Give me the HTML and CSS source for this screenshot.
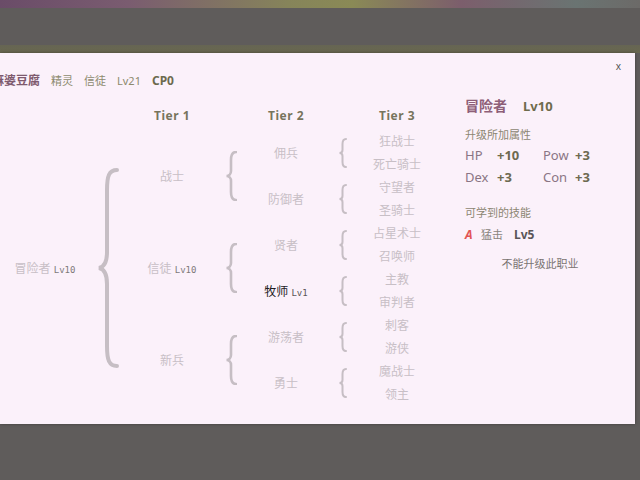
FILE: index.html
```html
<!DOCTYPE html>
<html lang="zh">
<head>
    <meta charset="UTF-8">
    <meta name="viewport" content="width=device-width, initial-scale=1.0">
    <title>职业树</title>
    <link rel="stylesheet" href="styles.css">
</head>
<body>

    <div class="modal">
        <span class="close">x</span>

        <div class="tree-side">
            <div class="who">
                <span class="name">麻婆豆腐</span>
                <span>精灵</span>
                <span>信徒</span>
                <span>Lv21</span>
                <span class="cp">CP0</span>
            </div>

            <div class="tier-heads">
                <span class="th th1">Tier 1</span>
                <span class="th th2">Tier 2</span>
                <span class="th th3">Tier 3</span>
            </div>

            <div class="branch">
                <div class="node lvl0">冒险者 <small>Lv10</small></div>
                <svg class="brace big" viewBox="0 0 22 200"><path d="M20,2 C12,2 10,8 10,22 L10,84 C10,94 7,99 2,100 C7,101 10,106 10,116 L10,178 C10,192 12,198 20,198"/></svg>
                <div class="kids">

                    <div class="branch">
                        <div class="node lvl1">战士</div>
                        <svg class="brace mid" viewBox="0 0 12 50"><path d="M11,1 C7,1 6,4 6,9 L6,20 C6,23 4,25 1.5,25 C4,25 6,27 6,30 L6,41 C6,46 7,49 11,49"/></svg>
                        <div class="kids">
                            <div class="branch">
                                <div class="node lvl2">佣兵</div>
                                <svg class="brace small" viewBox="0 0 9 30"><path d="M8,1 C5,1 4.5,3 4.5,6 L4.5,12 C4.5,14 3,15 1.5,15 C3,15 4.5,16 4.5,18 L4.5,24 C4.5,27 5,29 8,29"/></svg>
                                <div class="kids">
                                    <div class="node lvl3">狂战士</div>
                                    <div class="node lvl3">死亡骑士</div>
                                </div>
                            </div>
                            <div class="branch">
                                <div class="node lvl2">防御者</div>
                                <svg class="brace small" viewBox="0 0 9 30"><path d="M8,1 C5,1 4.5,3 4.5,6 L4.5,12 C4.5,14 3,15 1.5,15 C3,15 4.5,16 4.5,18 L4.5,24 C4.5,27 5,29 8,29"/></svg>
                                <div class="kids">
                                    <div class="node lvl3">守望者</div>
                                    <div class="node lvl3">圣骑士</div>
                                </div>
                            </div>
                        </div>
                    </div>

                    <div class="branch">
                        <div class="node lvl1">信徒 <small>Lv10</small></div>
                        <svg class="brace mid" viewBox="0 0 12 50"><path d="M11,1 C7,1 6,4 6,9 L6,20 C6,23 4,25 1.5,25 C4,25 6,27 6,30 L6,41 C6,46 7,49 11,49"/></svg>
                        <div class="kids">
                            <div class="branch">
                                <div class="node lvl2">贤者</div>
                                <svg class="brace small" viewBox="0 0 9 30"><path d="M8,1 C5,1 4.5,3 4.5,6 L4.5,12 C4.5,14 3,15 1.5,15 C3,15 4.5,16 4.5,18 L4.5,24 C4.5,27 5,29 8,29"/></svg>
                                <div class="kids">
                                    <div class="node lvl3">占星术士</div>
                                    <div class="node lvl3">召唤师</div>
                                </div>
                            </div>
                            <div class="branch">
                                <div class="node lvl2 current">牧师 <small>Lv1</small></div>
                                <svg class="brace small" viewBox="0 0 9 30"><path d="M8,1 C5,1 4.5,3 4.5,6 L4.5,12 C4.5,14 3,15 1.5,15 C3,15 4.5,16 4.5,18 L4.5,24 C4.5,27 5,29 8,29"/></svg>
                                <div class="kids">
                                    <div class="node lvl3">主教</div>
                                    <div class="node lvl3">审判者</div>
                                </div>
                            </div>
                        </div>
                    </div>

                    <div class="branch">
                        <div class="node lvl1">新兵</div>
                        <svg class="brace mid" viewBox="0 0 12 50"><path d="M11,1 C7,1 6,4 6,9 L6,20 C6,23 4,25 1.5,25 C4,25 6,27 6,30 L6,41 C6,46 7,49 11,49"/></svg>
                        <div class="kids">
                            <div class="branch">
                                <div class="node lvl2">游荡者</div>
                                <svg class="brace small" viewBox="0 0 9 30"><path d="M8,1 C5,1 4.5,3 4.5,6 L4.5,12 C4.5,14 3,15 1.5,15 C3,15 4.5,16 4.5,18 L4.5,24 C4.5,27 5,29 8,29"/></svg>
                                <div class="kids">
                                    <div class="node lvl3">刺客</div>
                                    <div class="node lvl3">游侠</div>
                                </div>
                            </div>
                            <div class="branch">
                                <div class="node lvl2">勇士</div>
                                <svg class="brace small" viewBox="0 0 9 30"><path d="M8,1 C5,1 4.5,3 4.5,6 L4.5,12 C4.5,14 3,15 1.5,15 C3,15 4.5,16 4.5,18 L4.5,24 C4.5,27 5,29 8,29"/></svg>
                                <div class="kids">
                                    <div class="node lvl3">魔战士</div>
                                    <div class="node lvl3">领主</div>
                                </div>
                            </div>
                        </div>
                    </div>

                </div>
            </div>
        </div>

        <div class="info">
            <div class="job"><span class="job-name">冒险者</span><span class="job-lv">Lv10</span></div>

            <div class="label">升级所加属性</div>
            <div class="stats">
                <span class="stat">HP</span><b>+10</b>
                <span class="stat">Pow</span><b>+3</b>
                <span class="stat">Dex</span><b>+3</b>
                <span class="stat">Con</span><b>+3</b>
            </div>

            <div class="label skills-label">可学到的技能</div>
            <div class="skill">
                <span class="skill-icon">A</span>
                <span class="skill-name">猛击</span>
                <b>Lv5</b>
            </div>

            <div class="note">不能升级此职业</div>
        </div>
    </div>

</body>
</html>
```

FILE: styles.css
```css
body {
    margin: 0;
    width: 640px;
    height: 480px;
    overflow: hidden;
    font-family: "Noto Sans", "Noto Sans CJK SC", sans-serif;
    background:
        linear-gradient(to right, #6a4c68, #7a5c70 20%, #86845a 45%, #8a8a56 55%, #7c5e6c 72%, #6a7472 90%, #6c6a68) 0 0 / 100% 8px no-repeat,
        linear-gradient(#666553, #69684f) 0 45px / 100% 8px no-repeat,
        #5f5c5b;
}
.modal {
    position: absolute;
    left: 0;
    top: 53px;
    width: 635px;
    height: 371px;
    display: flex;
    background: #fbf1fa;
    box-shadow: 0 0 3px rgba(0, 0, 0, 0.35);
}
.close {
    position: absolute;
    top: 6px;
    right: 14px;
    font-size: 10px;
    color: #555;
}
.tree-side {
    width: 436px;
}
.who {
    margin: 20px 0 0 -8px;
    display: flex;
    gap: 11px;
    font-size: 11px;
    line-height: 16px;
    color: #8c8a6e;
}
.who .name {
    font-size: 12px;
    font-weight: bold;
    color: #7e5a6e;
}
.who .cp {
    font-size: 12px;
    font-weight: bold;
    color: #6c6a4e;
}
.tier-heads {
    display: flex;
    margin-top: 15px;
    height: 26px;
    line-height: 23px;
    font-size: 12px;
    font-weight: bold;
    letter-spacing: 0.5px;
    color: #77745c;
    text-align: center;
}
.th1 { width: 88px; margin-left: 128px; }
.th2 { width: 80px; margin-left: 30px; }
.th3 { width: 78px; margin-left: 32px; }

.branch {
    display: flex;
    align-items: center;
}
.kids {
    display: flex;
    flex-direction: column;
}
.node {
    text-align: center;
    font-size: 12px;
    color: #c8bfc6;
    white-space: nowrap;
}
.node small {
    font-family: "DejaVu Sans Mono", monospace;
    font-size: 9px;
    color: #7e7a7b;
}
.node.current {
    color: #1e1c1e;
}
.node.current small {
    color: #5a5658;
}
.lvl0 { width: 90px; }
.lvl1 { width: 88px; }
.lvl2 { width: 80px; }
.lvl3 { width: 78px; height: 23px; line-height: 23px; }

.brace path {
    fill: none;
    stroke: #c6bec4;
    stroke-linecap: round;
}
.brace.big {
    width: 22px;
    height: 200px;
    margin: 0 9px 0 7px;
}
.brace.big path { stroke-width: 4; }
.brace.mid {
    width: 12px;
    height: 50px;
    margin: 0 9px;
}
.brace.mid path { stroke-width: 2.6; }
.brace.small {
    width: 9px;
    height: 30px;
    margin: 0 11px 0 12px;
}
.brace.small path { stroke-width: 2; }

.info {
    width: 150px;
    margin-left: 29px;
    padding-top: 43px;
}
.job {
    display: flex;
    align-items: baseline;
    gap: 16px;
    line-height: 20px;
}
.job-name {
    font-size: 14px;
    font-weight: bold;
    color: #8e5f78;
}
.job-lv {
    font-size: 13px;
    font-weight: bold;
    color: #6e6b4c;
}
.label {
    margin-top: 11px;
    font-size: 11px;
    line-height: 16px;
    color: #8c8672;
}
.stats {
    display: grid;
    grid-template-columns: 32px 46px 32px auto;
    row-gap: 2px;
    margin-top: 2px;
    font-size: 13px;
    line-height: 20px;
}
.stat {
    color: #8a7584;
}
.stats b {
    color: #6e6a50;
}
.skills-label {
    margin-top: 18px;
}
.skill {
    display: flex;
    align-items: center;
    margin-top: 5px;
    line-height: 18px;
    font-size: 11px;
}
.skill-icon {
    width: 16px;
    font-size: 12px;
    font-weight: bold;
    font-style: italic;
    color: #e25454;
}
.skill-name {
    width: 33px;
    color: #8a8480;
}
.skill b {
    font-size: 12px;
    color: #5a5658;
}
.note {
    margin-top: 12px;
    text-align: center;
    font-size: 11px;
    line-height: 16px;
    color: #7a7472;
}
```
